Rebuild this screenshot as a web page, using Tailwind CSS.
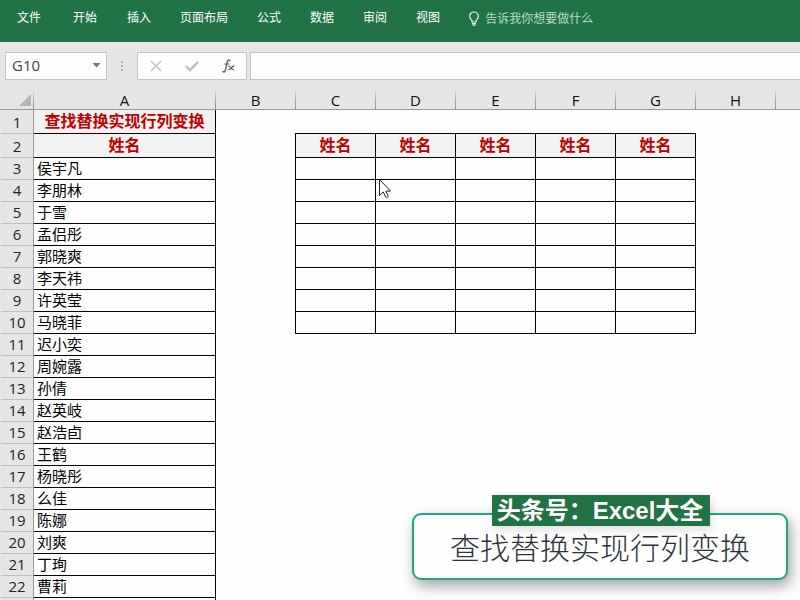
<!DOCTYPE html>
<html lang="zh-CN">
<head>
  <meta charset="UTF-8" />
  <meta name="viewport" content="width=device-width, initial-scale=1.0" />
  <title>查找替换实现行列变换</title>
  <script src="https://cdn.jsdelivr.net/npm/@tailwindcss/browser@4"></script>
</head>
<body class="relative w-[800px] h-[600px] overflow-hidden bg-[#fefefe] text-black font-['Open_Sans','Noto_Sans_CJK_SC',sans-serif]">

  <!-- Cinta de menú -->
  <nav class="flex h-[42px] bg-[#217346] pl-[17px] pt-[9px] text-[12px] leading-[18px] text-white whitespace-nowrap">
    <span class="mr-[32px]">文件</span>
    <span class="mr-[30px]">开始</span>
    <span class="mr-[29px]">插入</span>
    <span class="mr-[29px]">页面布局</span>
    <span class="mr-[29px]">公式</span>
    <span class="mr-[29px]">数据</span>
    <span class="mr-[29px]">审阅</span>
    <span class="mr-[28px]">视图</span>
    <svg class="w-[12px] h-[16px] mt-[2px] mr-[5px]" viewBox="0 0 12 16" fill="none" stroke="#e6f3ea" stroke-width="1.2">
      <path d="M4 11V9.6C3.2 8.4 1.6 7.4 1.6 5.4a4.4 4.4 0 0 1 8.8 0c0 2-1.6 3-2.4 4.2V11zM4 12.6h4M4.6 14.2h2.8" />
    </svg>
    <span class="pt-[1px] text-[#b9dcc6]">告诉我你想要做什么</span>
  </nav>

  <!-- Barra de fórmulas -->
  <div class="flex h-[49px] bg-[#e6e6e6] pt-[10px] pl-[5px]">
    <div class="flex items-center justify-between w-[102px] h-[28px] border border-[#c3c3c3] bg-[#fefefe] pl-[6px] pr-[5px] text-[15px] text-[#444]">
      <span class="pb-[1px]">G10</span>
      <svg class="w-[9px] h-[5px] mb-[2px]" viewBox="0 0 9 5"><path d="M0.5 0h8L4.5 4.5z" fill="#777" /></svg>
    </div>
    <div class="flex flex-col gap-[2px] w-[30px] pt-[9px] items-center">
      <i class="size-[2px] bg-[#b0b0b0]"></i>
      <i class="size-[2px] bg-[#b0b0b0]"></i>
      <i class="size-[2px] bg-[#b0b0b0]"></i>
    </div>
    <div class="flex items-center w-[110px] h-[28px] border border-[#c3c3c3] bg-[#fefefe] pl-[12px]">
      <svg class="w-[12px] h-[12px]" viewBox="0 0 12 12" fill="none" stroke="#c2c2c2" stroke-width="1.6"><path d="M1 1l10 10M11 1L1 11" /></svg>
      <svg class="w-[14px] h-[12px] ml-[23px]" viewBox="0 0 14 12" fill="none" stroke="#c2c2c2" stroke-width="2.4"><path d="M1 6.2l4 4L13 1.800" /></svg>
      <svg class="w-[13px] h-[14px] ml-[23px] mb-[1px]" viewBox="0 0 13 14" fill="none" stroke="#666" stroke-linecap="round">
        <path d="M7.700 1.600C6.600.5 5.600 1.400 5.200 3L3.300 11.300C3 12.700 2 13.300 1 12.500" stroke-width="1.500" />
        <path d="M2.800 5h4.200" stroke-width="1.200" />
        <path d="M6.900 7.200c1.500-.5 1.900 3.800 4.600 3.300M11.900 7c-1.800.1-3.300 3.700-5.300 3.600" stroke-width="1.300" />
      </svg>
    </div>
    <div class="flex-1 h-[28px] ml-[3px] border border-r-0 border-[#c3c3c3] bg-[#fefefe]"></div>
  </div>

  <!-- Encabezados de columna -->
  <div id="columnas" class="flex h-[19px] bg-[#e6e6e6] border-b border-[#999] text-[15px] leading-[18px] text-center text-[#111]">
    <div class="relative flex justify-end items-end w-[34px] shrink-0 pr-[3px] pb-[3px]">
      <svg class="w-[12px] h-[12px]" viewBox="0 0 12 12"><path d="M12 0v12H0z" fill="#b4b4b4" /></svg>
      <i class="absolute right-0 top-0 w-px h-[18px] bg-linear-to-b from-[#d8d8d8] to-[#8c8c8c]"></i>
    </div>
  </div>

  <div class="flex items-start">
    <div id="numeros" class="w-[34px] shrink-0 bg-[#e6e6e6] border-r border-[#999] pl-[1px] text-[15px] text-center text-[#222]"></div>
    <div id="nombres" class="w-[182px] shrink-0 border-r border-black text-[15px]"></div>
    <div id="tabla" class="grid grid-cols-5 w-[401px] ml-[79px] mt-[23px] border-t border-l border-black"></div>
  </div>

  <!-- Cursor -->
  <svg class="absolute left-[379px] top-[179px] w-[12px] h-[20px]" viewBox="0 0 12 20"><path d="M.5.5v16l3.700-3.500 2.600 5.200c1 .6 2.500 0 2.400-1.200l-2.300-4.900h4.600z" fill="#fff" stroke="#222" /></svg>

  <!-- Rótulo -->
  <div class="absolute left-[412px] top-[513px] w-[376px] h-[67px] rounded-[9px] border-2 border-[#1fa583] bg-[#fefefe] shadow-[3px_6px_14px_rgba(60,50,60,0.45)] text-center text-[30px] leading-[62px] font-light text-[#2b323b] font-['Noto_Sans_CJK_SC_Light','Noto_Sans_CJK_SC',sans-serif]">查找替换实现行列变换</div>
  <div class="absolute left-[492px] top-[495px] w-[218px] h-[31px] bg-[#217346] shadow-[2px_4px_10px_rgba(60,50,60,0.15)] pr-[2px] text-center text-[24px] leading-[32px] font-bold text-white whitespace-nowrap font-['Liberation_Sans','Noto_Sans_CJK_SC',sans-serif]">头条号：Excel大全</div>

  <script>
    const nombres = ["侯宇凡", "李朋林", "于雪", "孟侣彤", "郭晓爽", "李天祎", "许英莹", "马晓菲", "迟小奕", "周婉露",
      "孙倩", "赵英岐", "赵浩卣", "王鹤", "杨晓彤", "么佳", "陈娜", "刘爽", "丁珣", "曹莉", ""];

    let cols = "";
    "ABCDEFGH".split("").forEach((letra) => {
      const ancho = letra === "A" ? "w-[182px]" : "w-[80px]";
      cols += `<div class="${ancho} shrink-0 relative pr-[1px]">${letra}<i class="absolute right-0 top-0 w-px h-[18px] bg-linear-to-b from-[#d8d8d8] to-[#8c8c8c]"></i></div>`;
    });
    document.getElementById("columnas").innerHTML += cols;

    let nums = "";
    for (let i = 1; i <= 23; i++) {
      const alto = i < 3 ? "h-[24px] leading-[25px]" : "h-[22px] leading-[21px]";
      nums += `<div class="${alto} border-b border-[#c0c0c0]">${i < 23 ? i : ""}</div>`;
    }
    document.getElementById("numeros").innerHTML = nums;

    let filas = "";
    ["查找替换实现行列变换", "姓名"].forEach((t) => {
      filas += `<div class="h-[24px] leading-[23px] border-b border-black bg-[#f2f2f2] text-center text-[16px] font-bold text-[#c00000]">${t}</div>`;
    });
    nombres.forEach((n) => {
      filas += `<div class="h-[22px] leading-[21px] pl-[3px] border-b border-black">${n}</div>`;
    });
    document.getElementById("nombres").innerHTML = filas;

    let celdas = "";
    for (let i = 0; i < 45; i++) {
      celdas += i < 5
        ? `<div class="h-[24px] leading-[23px] border-r border-b border-black bg-[#f2f2f2] text-center text-[16px] font-bold text-[#c00000]">姓名</div>`
        : `<div class="h-[22px] border-r border-b border-black"></div>`;
    }
    document.getElementById("tabla").innerHTML = celdas;
  </script>
</body>
</html>
